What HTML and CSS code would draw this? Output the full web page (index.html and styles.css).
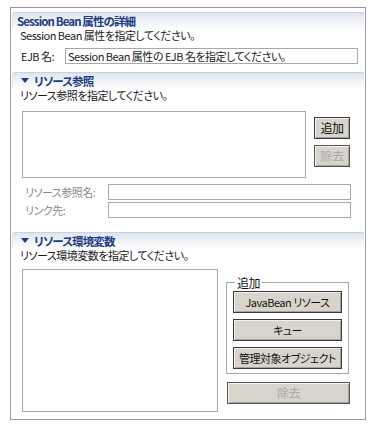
FILE: index.html
```html
<!DOCTYPE html>
<html lang="ja">
<head>
<meta charset="utf-8">
<link rel="stylesheet" href="styles.css">
</head>
<body>
<div class="panel">
  <section class="sec sec1">
    <div class="head"><span class="title">Session Bean 属性の詳細</span></div>
    <div class="desc">Session Bean 属性を指定してください。</div>
    <div class="ejb-row">
      <span class="label">EJB 名:</span>
      <div class="input">Session Bean 属性の EJB 名を指定してください。</div>
    </div>
  </section>

  <section class="sec sec2">
    <div class="head"><span class="tri"></span><span class="title">リソース参照</span></div>
    <div class="desc">リソース参照を指定してください。</div>
    <div class="list-row">
      <div class="list list1"></div>
      <div class="side-btns">
        <div class="btn small">追加</div>
        <div class="btn small disabled">除去</div>
      </div>
    </div>
    <div class="field-row">
      <span class="flabel">リソース参照名:</span>
      <div class="input finput"></div>
    </div>
    <div class="field-row">
      <span class="flabel">リンク先:</span>
      <div class="input finput"></div>
    </div>
  </section>

  <section class="sec sec3">
    <div class="head"><span class="tri"></span><span class="title">リソース環境変数</span></div>
    <div class="desc">リソース環境変数を指定してください。</div>
    <div class="env-row">
      <div class="list list2"></div>
      <div class="env-side">
        <fieldset class="group">
          <legend>追加</legend>
          <div class="btn wide">JavaBean リソース</div>
          <div class="btn wide">キュー</div>
          <div class="btn wide">管理対象オブジェクト</div>
        </fieldset>
        <div class="btn remove disabled">除去</div>
      </div>
    </div>
  </section>
</div>
</body>
</html>
```

FILE: styles.css
```css
* { box-sizing: border-box; }
html, body { margin: 0; padding: 0; background: #ffffff; }
body {
  font-family: "Noto Sans CJK JP", "Noto Sans", sans-serif;
  font-size: 11px;
  font-feature-settings: "palt";
  letter-spacing: -0.5px;
  color: #1a1a1a;
  line-height: 13px;
}
.panel {
  margin: 7px 0 0 10px;
  width: 356px;
  height: 413px;
  border: 1px solid #9a9a9a;
  padding: 4px 0 0 1px;
}
.head {
  height: 16px;
  margin-right: 1px;
  border-top: 1px solid #c9d2df;
  border-left: 1px solid #dfe4ec;
  border-radius: 3px 0 0 0;
  background: linear-gradient(to bottom, #dfe5ee 0%, #eef1f6 50%, #fbfcfd 100%);
  display: flex;
  align-items: center;
  padding-left: 4px;
}
.title {
  font-weight: bold;
  font-size: 11.5px;
  letter-spacing: -0.9px;
  color: #1d3a82;
  line-height: 14px;
}
.tri {
  width: 0; height: 0;
  border-left: 4px solid transparent;
  border-right: 4px solid transparent;
  border-top: 5px solid #1d3a82;
  margin: 0 5px 0 4px;
}
.desc {
  padding: 1px 0 0 8px;
  height: 15px;
}
.ejb-row {
  display: flex;
  align-items: center;
  margin-top: 5px;
  height: 16px;
}
.label { width: 53px; padding-left: 9px; }
.input {
  border: 1px solid #a9a9a9;
  background: #fff;
  height: 16px;
  line-height: 14px;
  padding-left: 2px;
}
.ejb-row .input { width: 293px; }
.sec2 { margin-top: 8px; }
.list {
  border: 1px solid #a9a9a9;
  background: #fff;
}
.list-row {
  display: flex;
  margin-top: 8px;
  padding-left: 10px;
}
.list1 { width: 284px; height: 67px; }
.side-btns {
  display: flex;
  flex-direction: column;
  gap: 6px;
  margin: 6px 0 0 8px;
}
.btn {
  border: 1px solid #3a3a3a;
  background: #d8d4cc;
  box-shadow: inset 1px 1px 0 #f4f2ee, inset -1px -1px 0 #a8a49c;
  text-align: center;
  color: #111;
}
.btn.small {
  width: 36px;
  height: 22px;
  line-height: 20px;
  font-size: 12px;
}
.btn.disabled { color: #a8a8a8; border-color: #555; }
.field-row {
  display: flex;
  align-items: center;
  height: 16px;
  margin-top: 2px;
}
.list-row + .field-row { margin-top: 6px; }
.flabel { width: 96px; padding-left: 13px; color: #8a8a8a; }
.finput { width: 243px; }
.sec3 { margin-top: 14px; }
.env-row {
  display: flex;
  margin-top: 6px;
  padding-left: 10px;
}
.list2 { width: 196px; height: 143px; }
.env-side {
  margin-left: 8px;
  display: flex;
  flex-direction: column;
}
.group {
  margin: 7px 0 0 0;
  width: 123px;
  height: 98px;
  border: 1px solid #a9a9a9;
  padding: 0 6px 0 6px;
  display: flex;
  flex-direction: column;
  gap: 6px;
}
.group legend {
  padding: 0 2px;
  margin-left: 2px;
  font-size: 12px;
  line-height: 13px;
  color: #111;
}
.btn.wide {
  width: 109px;
  height: 22px;
  line-height: 20px;
  font-size: 11px;
}
.group .btn.wide:first-of-type { margin-top: 2px; }
.btn.remove {
  margin-top: 8px;
  margin-left: 1px;
  width: 123px;
  height: 22px;
  line-height: 20px;
  font-size: 12px;
}
```
